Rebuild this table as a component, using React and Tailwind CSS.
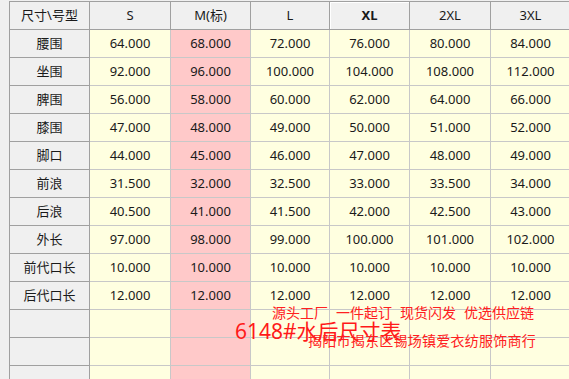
const cols = ["S", "M(标)", "L", "XL", "2XL", "3XL"];

const rows = [
  ["腰围", "64.000", "68.000", "72.000", "76.000", "80.000", "84.000"],
  ["坐围", "92.000", "96.000", "100.000", "104.000", "108.000", "112.000"],
  ["脾围", "56.000", "58.000", "60.000", "62.000", "64.000", "66.000"],
  ["膝围", "47.000", "48.000", "49.000", "50.000", "51.000", "52.000"],
  ["脚口", "44.000", "45.000", "46.000", "47.000", "48.000", "49.000"],
  ["前浪", "31.500", "32.000", "32.500", "33.000", "33.500", "34.000"],
  ["后浪", "40.500", "41.000", "41.500", "42.000", "42.500", "43.000"],
  ["外长", "97.000", "98.000", "99.000", "100.000", "101.000", "102.000"],
  ["前代口长", "10.000", "10.000", "10.000", "10.000", "10.000", "10.000"],
  ["后代口长", "12.000", "12.000", "12.000", "12.000", "12.000", "12.000"],
  ["", "", "", "", "", "", ""],
  ["", "", "", "", "", "", ""],
  ["", "", "", "", "", "", ""],
];

const font = { fontFamily: '"Noto Sans", "Noto Sans CJK SC", sans-serif' };

function HeaderCell({ children, bold }) {
  return (
    <div
      className={
        "flex h-[28px] items-center justify-center border-r border-b border-[#a0a0a0] bg-[#f0f0f0] text-[13px] text-[#1a1a1a] " +
        (bold ? "font-bold shadow-[inset_1px_1px_0_#ffffff]" : "")
      }
    >
      {children}
    </div>
  );
}

function DataCell({ children, pink }) {
  return (
    <div
      className={
        "flex h-[28px] items-center justify-center border-r border-b border-[#c8c8c8] text-[13px] text-[#1a1a1a] " +
        (pink ? "bg-[#ffc9c9]" : "bg-[#ffffe0]")
      }
    >
      {children}
    </div>
  );
}

export default function App() {
  return (
    <div
      className="relative h-[379px] w-[569px] overflow-hidden bg-[#f0f0f0] pl-[9px] pt-px"
      style={font}
    >
      <div className="grid w-[561px] grid-cols-[80px_81px_80px_79px_80px_81px_80px] border-t border-l border-[#a0a0a0]">
        <HeaderCell>尺寸\号型</HeaderCell>
        {cols.map((c) => (
          <HeaderCell key={c} bold={c === "XL"}>
            {c}
          </HeaderCell>
        ))}
        {rows.map((r, i) =>
          r.map((v, j) =>
            j === 0 ? (
              <HeaderCell key={i + "-" + j}>{v}</HeaderCell>
            ) : (
              <DataCell key={i + "-" + j} pink={j === 2}>
                {v}
              </DataCell>
            )
          )
        )}
      </div>

      <div className="absolute left-[272px] top-[304px] flex gap-[8px] text-[14px] leading-[18px] text-[#ff2020]">
        <span>源头工厂</span>
        <span>一件起订</span>
        <span>现货闪发</span>
        <span>优选供应链</span>
      </div>
      <div className="absolute left-[235px] top-[318px] text-[21px] leading-[26px] text-[#ff1a1a]">
        6148#水后尺寸表
      </div>
      <div className="absolute left-[308px] top-[332px] text-[14px] leading-[18px] tracking-[0.25px] text-[#ff2020]">
        揭阳市揭东区锡场镇爱衣纺服饰商行
      </div>
    </div>
  );
}
